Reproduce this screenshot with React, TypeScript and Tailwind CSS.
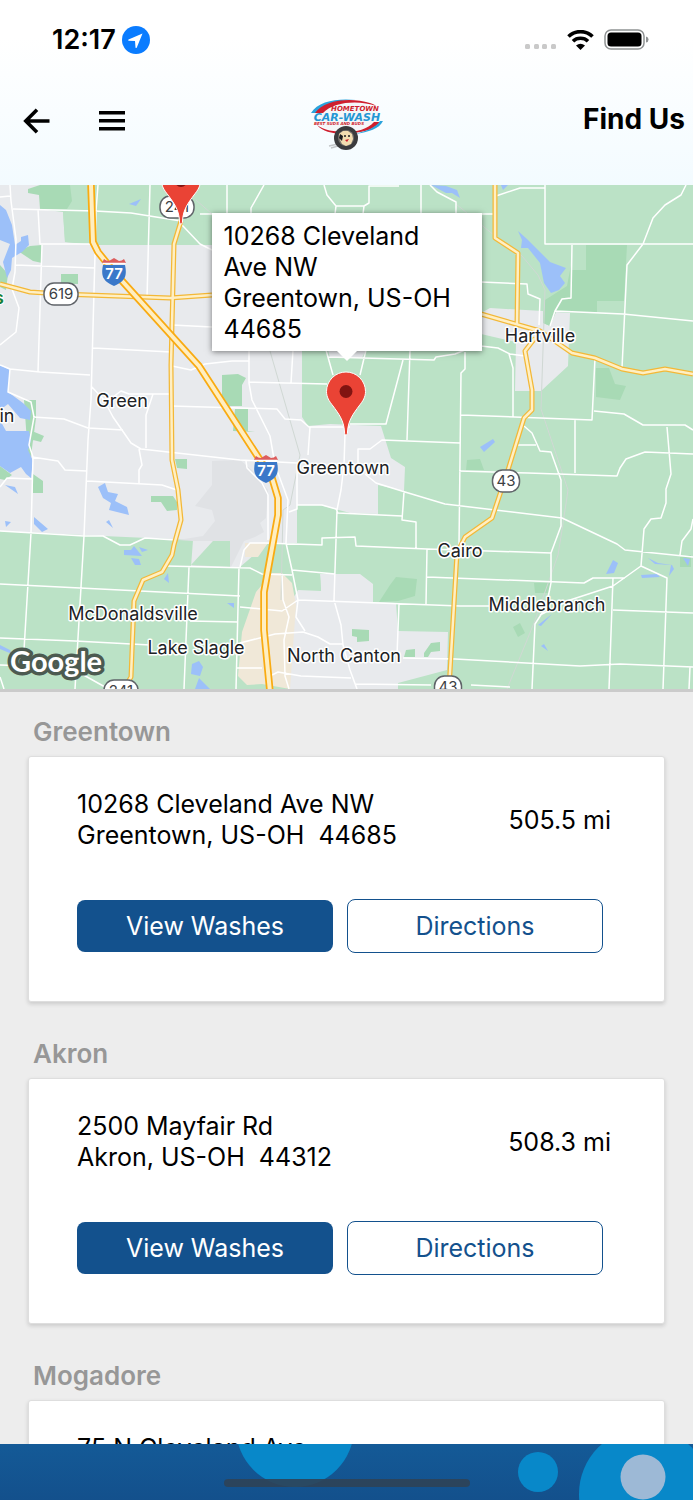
import React from 'react';

interface Wash {
  city: string;
  street: string;
  region: string;
  distance: string;
}

const washes: Wash[] = [
  { city: 'Greentown', street: '10268 Cleveland Ave NW', region: 'Greentown, US-OH  44685', distance: '505.5 mi' },
  { city: 'Akron', street: '2500 Mayfair Rd', region: 'Akron, US-OH  44312', distance: '508.3 mi' },
  { city: 'Mogadore', street: '75 N Cleveland Ave', region: 'Mogadore, US-OH  44260', distance: '510.1 mi' },
];

const urban = [
  'M0 185H40V209L63 212L65 242L100 245H302V417L308 426L330 424L381 426L391 458L405 467L404 491L378 485V514L350 513L320 505H297V543L268 543L240 567H191L193 540L103 536L0 531Z',
  'M328 350H366L362 358H330Z',
  'M481 313L490 308L543 311L543 323L550 326L555 312L570 313L568 366L541 391H515L516 342L481 334Z',
  'M320 574H360L373 584V602L396 603L398 631L448 632L447 670L398 683V689H289L292 600L298 590H321Z',
];

const airport =
  'M212 461L240 460L252 470L268 490L266 518L260 523L264 532L255 537L244 541L231 567H191L213 541H193L178 540L203 536L215 521L212 510L195 506L212 485Z';

const sand = ['M245 543H268L258 557H245Z', 'M272 573L282 573L292 583L296 605L290 689L262 684L247 685L238 676L242 632L256 592Z'];

const parks = [
  'M28 189L40 185H70L72 201L67 209H40L39 195L28 193Z',
  'M61 274H78V284H61Z',
  'M18 251L30 246L42 245V263L33 261Z',
  'M0 265L8 274L6 290L0 287Z',
  'M222 375L238 374L246 378L242 385V406L222 406Z',
  'M235 409H248V431L255 432L233 431Z',
  'M175 459H187V469L177 468Z',
  'M151 496H173L177 502V510L167 511L161 502H151Z',
  'M24 400L36 400L36 418L32 448L30 466L22 455L27 442Z',
  'M33 474L43 481V493H33Z',
  'M32 431L44 436L41 442L33 440Z',
  'M586 245H627L624 301H597V312H555L562 299H571L572 270H586Z',
  'M571 265L571 298H562L550 326L543 323L545 300L567 286Z',
  'M596 368L609 368L615 384L626 386L620 400L596 397Z',
  'M467 460L480 459L484 470H466Z',
  'M534 583H552L549 593H535Z',
  'M513 627L520 623L525 633L518 637Z',
  'M680 557L691 555V567H680Z',
  'M396 577L417 579L415 596L398 601L379 602L390 585Z',
  'M352 629L369 630V641L357 642V637L352 636Z',
  'M406 650L415 649V657H404Z',
  'M424 653L431 643L440 642V651L431 652L428 657H424Z',
  'M0 466L12 475L5 480L0 479Z',
];

const lakes = [
  'M0 205L6 210L12 225L15 245L21 241V237L28 235L29 245L22 252L12 258L11 270L7 278L3 262L10 244L0 240Z',
  'M0 365L10 370L8 392L23 403L31 411L30 420L20 418L8 404L0 410Z',
  'M0 420L6 431H29L31 440L28 450L33 461L31 478L26 474L21 467L10 473L0 466Z',
  'M5 485L15 487L18 494Z',
  'M5 521L11 522L6 527Z',
  'M34 517L48 529L42 532L34 524Z',
  'M129 204L141 199L136 206Z',
  'M98 487L105 483L108 492L118 494L115 501L127 507L129 515L109 510L111 503L103 498Z',
  'M106 522L109 520L113 528Z',
  'M124 550L131 550L134 546L142 556L124 555Z',
  'M139 547L148 550L142 552Z',
  'M131 558L139 559L141 565H135Z',
  'M164 579L168 573L169 583Z',
  'M227 603H234V608Z',
  'M192 664L199 661L203 667L200 676L191 674Z',
  'M199 678L210 689H195Z',
  'M0 645L10 650L12 654L0 649Z',
  'M431 185L446 186L457 190L460 198L452 193L446 193Z',
  'M518 231L527 239L550 262L566 268L560 276L565 283L559 290L551 293L544 283L540 263L528 248H521L522 240Z',
  'M501 185H508L503 190Z',
  'M480 447L493 439L495 442L484 452Z',
  'M606 574L613 560L618 563L614 573Z',
  'M648 558L658 563L672 565L674 569L669 576L671 565L655 564Z',
  'M641 575L657 574L660 577L642 578Z',
  'M683 558L690 559L688 566Z',
  'M538 625L552 614L541 626Z',
  'M541 646L544 644L548 651Z',
];

const streets = [
  'M10 185L11 201L16 239L15 272L12 289L19 308L16 332L0 345',
  'M0 197L10 196M13 209L95 211L131 213L181 221',
  'M98 185L96 211L95 255L91 400L88 440L84 536L75 689',
  'M150 185L147 298M227 185V214M38 209L40 244L95 244M42 245L38 372M15 265L95 268M93 348L171 352',
  'M0 365L10 369L8 392L31 402L34 417L29 445L33 457L31 533L24 650',
  'M10 369L40 372L90 375M172 325L212 327M172 366L191 370L205 364L232 361H249',
  'M33 417L64 419L88 428L123 430M91 386L104 400L113 417L131 443L141 449L240 460L297 463',
  'M113 397L121 391L129 394H171M153 394L146 415V448M139 449L142 465L139 470V483',
  'M171 406L277 409L285 419L301 420L309 427H350',
  'M182 225L200 244L212 250M32 457L58 461L65 470L87 471M87 481L162 485L177 490M0 487L7 478L33 479',
  'M0 531L84 536H103L120 545H130L145 538L175 540',
  'M0 584L80 588L240 596M0 638L75 641L150 645M166 566L250 568L262 574L292 575',
  'M189 567L184 689M190 621L238 622M239 567L236 689M0 665L30 666M80 673L105 687M0 677L4 689',
  'M264 185L251 208V214M200 214H212M324 185L327 195L336 206L335 214M336 206H364L363 214M364 206L369 203V186H399',
  'M421 185V214M430 185L437 192L456 202V214M471 214H495',
  'M249 350V383L252 400L270 436L275 465L288 500L286 543L292 570L298 600L296 617L305 631',
  'M293 350L291 383M249 382L327 384M326 350L333 375M366 350L360 375M328 357L434 360L436 357L455 354L475 346',
  'M403 360L386 424H350M410 350L407 440M465 352V369L461 373L459 545M461 415L592 420L595 358',
  'M358 465V449H370L382 440L460 443M310 427L308 455M297 467V509L289 512',
  'M345 434L344 465L341 490L337 510L334 600L341 625L343 645L350 670L357 689',
  'M246 461L247 468L262 483L268 495V540M297 505L322 505L336 509L338 513L402 516',
  'M240 567L244 550L250 543L265 543L322 545V538L355 537L356 546L427 549L551 553',
  'M365 474L376 483L405 492L445 504L562 518L617 544L625 550L693 557',
  'M404 492L402 520L416 522V548M427 549L426 604M292 570L335 574M298 600L460 606H493',
  'M240 607L282 611L298 600M282 574L283 600L289 617L284 640L285 676L289 689M399 604L397 655',
  'M270 676L278 672L301 676L351 678M355 684L431 685M237 668H262M240 643L275 634L303 632L318 637L330 644H343',
  'M403 658L455 659L580 666L620 664L693 667M427 577L584 583L593 578H625',
  'M575 420V473M459 471L528 473L617 476L620 468L626 459L645 452L693 454',
  'M524 426L532 433L540 451L551 452L561 480V526L551 553V583L546 607L535 624L532 689M518 445H536',
  'M667 427L671 474L666 489V503L661 518L651 519L644 529L641 566L613 586L570 600L540 615',
  'M641 566L667 578L663 689M613 578L609 689M613 610L693 613M693 519L691 529L682 541L680 555M690 667L689 689',
  'M496 196L520 188H545M545 185V244H693M686 185L681 195L665 205L653 218L643 244L627 265L622 368',
  'M572 245L571 298L562 299L555 311L550 326M555 311L623 314L693 321',
  'M481 282L527 284L528 294L540 299L539 325M481 346L498 348L510 354L525 356M509 354L513 368V417',
  'M594 411L624 414L643 425H685L693 430M471 685L510 687',
];

const rails = [
  'M456 204L495 236L522 256L538 275L545 290L541 409L548 430L568 490L562 530L558 555L534 623L507 689',
  'M270 351L300 455L290 505L283 510L281 600',
  'M196 200L212 214',
];

const routes = [
  'M0 284L30 292L61 294L170 298L212 295',
  'M181 221L174 244L171 365L172 460L178 490L181 520L174 545L172 555L162 572L143 580L134 601L131 677L122 692',
  'M495 185V238L518 253L517 325',
  'M481 314L540 331L572 353L595 358L622 369L643 373L665 369L693 374',
  'M535 338L525 351L532 390V410L524 418L508 470L492 518L465 537L457 553L449 689',
];

const interstate = 'M91 185L93 242L98 252L114 272L199 366L262 463L272 478L278 498V515L264 592V630L270 692';

const towns = [
  { name: 'Green', x: 122, y: 407 },
  { name: 'Hartville', x: 540, y: 342 },
  { name: 'Greentown', x: 343, y: 474 },
  { name: 'Cairo', x: 460, y: 557 },
  { name: 'Middlebranch', x: 547, y: 611 },
  { name: 'McDonaldsville', x: 133, y: 620 },
  { name: 'Lake Slagle', x: 196, y: 654 },
  { name: 'North Canton', x: 344, y: 662 },
  { name: 'in', x: 7, y: 422 },
];

const RouteSign: React.FC<{ x: number; y: number; label: string; wide?: boolean }> = ({ x, y, label, wide }) => {
  const w = wide ? 34 : 27;
  return (
    <g>
      <rect x={x - w / 2} y={y - 11} width={w} height={22} rx={10} fill="#fff" stroke="#5f6368" strokeWidth={1.5} />
      <text x={x} y={y + 5} textAnchor="middle" fontSize={15} fill="#3c4043">
        {label}
      </text>
    </g>
  );
};

const InterstateSign: React.FC<{ x: number; y: number }> = ({ x, y }) => (
  <g transform={`translate(${x} ${y})`}>
    <path d="M-11 -7C-13 3 -12 9 0 14C12 9 13 3 11 -7Z" fill="#3a78c9" />
    <path d="M-10 -13Q-8 -11 -5 -11L0 -14L5 -11Q8 -11 10 -13L12 -9H-12Z" fill="#dc5d5d" />
    <path d="M-11.500 -8.500H11.500" stroke="#fff" strokeWidth={1.5} />
    <text y={7} textAnchor="middle" fontSize={15} fontWeight={600} fill="#fff">
      77
    </text>
  </g>
);

// x, y is the tip of the pin
const Pin: React.FC<{ x: number; y: number }> = ({ x, y }) => (
  <g transform={`translate(${x} ${y})`}>
    <path
      d="M0 0C-1 0 -1.500 -1 -1.500 -3C-2 -15 -8 -22 -13 -29C-17 -34 -19.500 -38 -19.500 -43.500A19.500 19.500 0 0 1 19.500 -43.500C19.500 -38 17 -34 13 -29C8 -22 2 -15 1.500 -3C1.500 -1 1 0 0 0Z"
      fill="#ea4335"
      stroke="#fff"
      strokeWidth={1}
    />
    <circle cy={-43.5} r={6.5} fill="#811411" />
  </g>
);

const WashMap: React.FC = () => (
  <section className="relative aspect-[11/8] w-full shrink-0 overflow-hidden" aria-label="Map">
    <svg
      className="block h-full w-full"
      viewBox="0 185 693 504"
      preserveAspectRatio="xMidYMid slice"
      fontFamily="Inter, sans-serif"
      strokeLinejoin="round"
    >
      <rect y={185} width={693} height={504} fill="#bbe2c6" />
      <path d={urban.join('')} fill="#e8eaed" />
      <path d="M63 212L147 213L212 222V245L100 245L65 242Z" fill="#bbe2c6" />
      <path d="M72 185H212V222L63 212L67 209L72 201Z" fill="#bbe2c6" />
      <path d={airport} fill="#e0e2e5" />
      <path d="M191 565L213 541L230 541V567Z" fill="#bbe2c6" />
      <path d={sand.join('')} fill="#f0e8d8" />
      <path d="M296 573L320 574L321 591L298 590Z" fill="#bbe2c6" />
      <path d={parks.join('')} fill="#a8dab5" />
      <path d={lakes.join('')} fill="#9cc0f9" />
      <g fill="none">
        <path d={rails.join('')} stroke="#d0d8d4" strokeWidth={1} />
        <path d={streets.join('')} stroke="#fff" strokeWidth={1.5} />
        <path d={routes.join('')} stroke="#f3b837" strokeWidth={5} />
        <path d={routes.join('')} stroke="#ffefc3" strokeWidth={2.5} />
        <path d={interstate} stroke="#f9ab12" strokeWidth={7.5} />
        <path d={interstate} stroke="#ffeec0" strokeWidth={4} />
      </g>

      <RouteSign x={61} y={294} label="619" wide />
      <RouteSign x={177} y={207} label="241" wide />
      <RouteSign x={506} y={481} label="43" />
      <RouteSign x={121} y={691} label="241" wide />
      <RouteSign x={448} y={687} label="43" />
      <InterstateSign x={114} y={272} />
      <InterstateSign x={266} y={469} />

      <g fontSize={18} fill="#202124" stroke="#fff" strokeWidth={3} paintOrder="stroke" textAnchor="middle">
        {towns.map((town) => (
          <text key={town.name} x={town.x} y={town.y}>
            {town.name}
          </text>
        ))}
      </g>
      <text x={-6} y={304} fontSize={18} fontWeight={600} fill="#188038" stroke="#fff" strokeWidth={2} paintOrder="stroke">
        s
      </text>

      <Pin x={181} y={224} />
      <Pin x={346} y={435} />

      <text
        x={10}
        y={672}
        fontFamily="Lato, sans-serif"
        fontWeight={700}
        fontSize={29}
        fill="#fff"
        stroke="#4c5a50"
        strokeWidth={7}
        paintOrder="stroke"
      >
        Google
      </text>
    </svg>

    <div className="absolute top-7 left-1/2 w-[270px] -translate-x-1/2 bg-white px-3 pt-2 pb-1.5 text-[25px] leading-[31px] shadow-[0_1px_6px_rgba(0,0,0,0.5)]">
      10268 Cleveland Ave NW
      <br />
      Greentown, US-OH 44685
      <svg className="absolute top-full left-1/2 -translate-x-1/2" width="20" height="10" viewBox="0 0 20 10">
        <path d="M0 0H20L10 10Z" fill="#fff" />
      </svg>
    </div>
  </section>
);

const Logo: React.FC = () => (
  <svg width="74" height="52" viewBox="0 0 74 52" fontFamily="DejaVu Sans, sans-serif" fontWeight={700} fontStyle="italic">
    <ellipse cx={37} cy={18} rx={33} ry={15} fill="#f4f6f8" />
    <path d="M1 14C8 2 28 -1 46 1C28 1 13 5 6 14Z" fill="#2ba3dc" />
    <path d="M5 14C14 1 40 -2 60 4C63 5 65 6 66 7C50 1 24 2 13 14Z" fill="#cf1f2e" />
    <path d="M7 26C14 34 28 36 42 34C56 33 66 29 70 23H64C58 30 46 33 36 33C24 33 14 31 7 26Z" fill="#cf1f2e" />
    <path d="M45 35C59 33 69 30 73 22H70C66 28 57 32 45 35Z" fill="#2ba3dc" />
    <text x={45} y={12} textAnchor="middle" fontSize={7} fill="#cf1f2e">
      HOMETOWN
    </text>
    <text x={37} y={22} textAnchor="middle" fontSize={11} fill="#2496d4">
      CAR-WASH
    </text>
    <text x={29} y={26} textAnchor="middle" fontSize={4} fill="#cf1f2e">
      BEST SUDS AND BUDS
    </text>
    <path d="M19 47L28 45M21 49L28 47" stroke="#c4c7ca" strokeWidth={1.5} />
    <circle cx={36} cy={39} r={12} fill="#3b3b3d" />
    <circle cx={36} cy={39} r={8} fill="#77736e" />
    <path d="M29 35L33 32L38 32L42 35L43 40L41 45L36 47L32 45L30 41Z" fill="#f3ddb0" />
    <path d="M30 35L33 37L32 42L29 39Z" fill="#1d1d1f" />
    <path d="M35 41L39 40L37 43Z" fill="#cf1f2e" />
    <circle cx={35} cy={37} r={1} fill="#1d1d1f" />
    <circle cx={39} cy={37} r={1} fill="#1d1d1f" />
  </svg>
);

const StatusBar: React.FC = () => (
  <div className="flex h-20 items-center justify-between pr-11 pl-[52px]">
    <div className="flex items-center gap-1.5">
      <span className="text-[27px] leading-8 font-semibold">12:17</span>
      <svg width="28" height="28" viewBox="0 0 28 28">
        <circle cx={14} cy={14} r={14} fill="#0a7cff" />
        <path d="M20.500 7.500L6.500 13.500Q5.500 14.300 6.800 14.800L13 15L13.500 21.500Q14 22.500 14.800 21.500Z" fill="#fff" />
      </svg>
    </div>
    <div className="flex items-center gap-2.5">
      <svg width="32" height="22" viewBox="0 0 32 22" fill="#c9c9c9">
        <rect x={0} y={15} width={5} height={5} rx={1.5} />
        <rect x={9} y={15} width={5} height={5} rx={1.5} />
        <rect x={17} y={15} width={5} height={5} rx={1.5} />
        <rect x={26} y={15} width={5} height={5} rx={1.5} />
      </svg>
      <svg width="27" height="20" viewBox="0 0 27 20" fill="none" stroke="#000">
        <path d="M1.500 6.500C8 0 19 0 25.500 6.500" strokeWidth={3.6} />
        <path d="M6 11.200C10 7.300 17 7.300 21 11.200" strokeWidth={3.6} />
        <path d="M9 15.500Q13.500 12 18 15.500L13.500 20Z" fill="#000" stroke="none" />
      </svg>
      <svg width="45" height="22" viewBox="0 0 45 22">
        <rect x={1} y={1} width={39} height={19} rx={6} fill="none" stroke="#8f9293" strokeWidth={1.5} />
        <rect x={3.5} y={3.5} width={34} height={14} rx={3.500} fill="#000" />
        <path d="M42 7.500Q44.500 8 44.500 10.500T42 13.500Z" fill="#8f9293" />
      </svg>
    </div>
  </div>
);

const NavBar: React.FC = () => (
  <nav className="grid h-[105px] grid-cols-[1fr_auto_1fr] items-center px-2 pb-6">
    <div className="flex items-center gap-12 pl-3.5">
      <button type="button" aria-label="Back">
        <svg width="28" height="28" viewBox="0 0 28 28" fill="none" stroke="#000" strokeWidth={3.6}>
          <path d="M27.500 14H4M15 2.800L3.800 14L15 25.200" />
        </svg>
      </button>
      <button type="button" aria-label="Menu">
        <svg width="28" height="28" viewBox="0 0 28 28">
          <path d="M1 4H27V7.500H1ZM1 12H27V15.500H1ZM1 20H27V23.500H1Z" />
        </svg>
      </button>
    </div>
    <a href="#home" aria-label="Hometown Car-Wash" className="mt-2">
      <Logo />
    </a>
    <h1 className="pb-1 text-right text-[28px] leading-9 font-bold">Find Us</h1>
  </nav>
);

const WashCard: React.FC<{ wash: Wash }> = ({ wash }) => (
  <section className="mb-3">
    <h2 className="flex h-16 items-center pt-4 pl-[5px] text-[26px] leading-8 font-semibold text-[#979797]">{wash.city}</h2>
    <div className="rounded-[3px] border border-[#dedede] bg-white px-12 pt-8 pb-12 shadow-[0_2px_4px_rgba(0,0,0,0.15)]">
      <div className="flex items-center justify-between pr-[5px] text-[25px] leading-[31px]">
        <address className="whitespace-pre not-italic">
          {wash.street}
          <br />
          {wash.region}
        </address>
        <span>{wash.distance}</span>
      </div>
      <div className="mt-12 mr-[13px] grid grid-cols-2 items-center gap-3.5 text-[25px] leading-8">
        <button type="button" className="h-[52px] rounded-lg bg-[#13518d] text-white">
          View Washes
        </button>
        <button type="button" className="h-[54px] rounded-lg border border-[#13518d] text-[#13518d]">
          Directions
        </button>
      </div>
    </div>
  </section>
);

const BottomBar: React.FC = () => (
  <footer className="relative h-14 shrink-0 overflow-hidden bg-linear-to-b from-[#145a97] to-[#13508c]">
    <svg className="h-full w-full" viewBox="0 0 693 56" preserveAspectRatio="xMidYMid slice">
      <g fill="#0888c9">
        <circle cx={295} cy={-16} r={59} />
        <circle cx={538} cy={28} r={20} />
        <circle cx={645} cy={50} r={66} />
      </g>
      <circle cx={643} cy={33} r={22.5} fill="#9db9d6" />
    </svg>
    <div className="absolute bottom-[13px] left-1/2 h-2 w-[246px] -translate-x-1/2 rounded-full bg-[#2f4257]/90" />
  </footer>
);

export default function App() {
  return (
    <div className="flex h-screen flex-col overflow-hidden bg-[#ededed] font-['Inter',sans-serif] text-black">
      <header className="shrink-0 bg-linear-to-b from-white from-20% to-[#f3fbff]">
        <StatusBar />
        <NavBar />
      </header>
      <WashMap />
      <main className="min-h-0 flex-1 overflow-hidden border-t-3 border-[#cbcbcb] px-7">
        {washes.map((wash) => (
          <WashCard key={wash.city} wash={wash} />
        ))}
      </main>
      <BottomBar />
    </div>
  );
}
